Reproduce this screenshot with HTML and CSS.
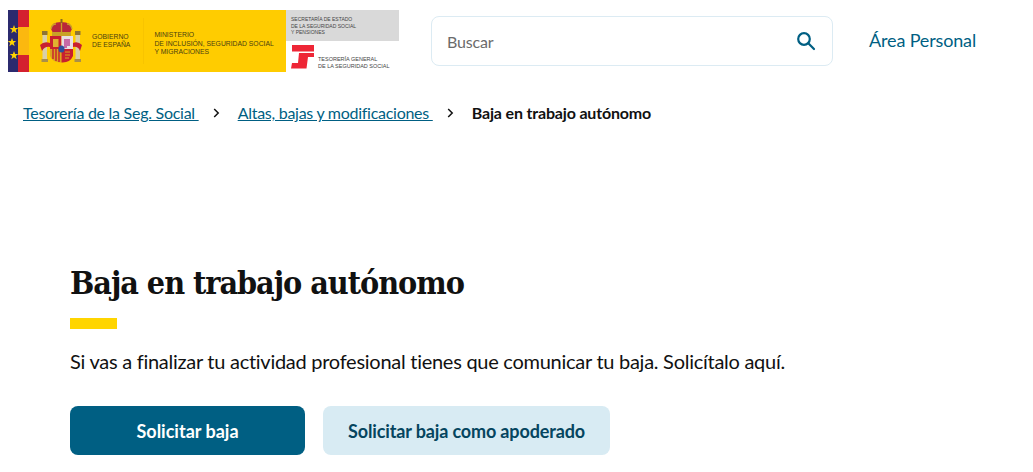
FILE: index.html
```html
<!DOCTYPE html>
<html lang="es">
<head>
  <meta charset="UTF-8">
  <meta name="viewport" content="width=device-width, initial-scale=1.0">
  <title>Baja en trabajo autónomo</title>
  <link rel="stylesheet" href="styles.css">
</head>
<body>
  <header class="site-header">
    <a href="#" class="logo">
      <div class="logo-flag">
        <div class="flag-eu">
          <svg width="10" height="62" viewBox="0 0 10 62">
            <polygon fill="#ffd400" points="6,15 7.100,18 10.300,18 7.700,20 8.700,23.200 6,21.300 3.300,23.200 4.300,20 1.700,18 4.900,18"/>
            <polygon fill="#ffd400" points="4,28 5.100,31 8.300,31 5.700,33 6.700,36.200 4,34.300 1.300,36.200 2.300,33 -0.300,31 2.900,31"/>
            <polygon fill="#ffd400" points="6,41 7.100,44 10.300,44 7.700,46 8.700,49.200 6,47.300 3.300,49.200 4.300,46 1.700,44 4.900,44"/>
          </svg>
        </div>
        <div class="flag-es"></div>
      </div>
      <div class="logo-gov">
        <svg class="arms" width="42" height="44" viewBox="0 0 42 44">
          <!-- columnas -->
          <rect x="2.500" y="15" width="4.500" height="25" fill="#d9cfa8"/>
          <rect x="35.500" y="15" width="4.500" height="25" fill="#d9cfa8"/>
          <rect x="2" y="12" width="5.500" height="4" fill="#8f7434"/>
          <rect x="35" y="12" width="5.500" height="4" fill="#8f7434"/>
          <rect x="1.500" y="40" width="6.500" height="3" fill="#a98f4a"/>
          <rect x="34.500" y="40" width="6.500" height="3" fill="#a98f4a"/>
          <path d="M0 26 Q4 22 10 24 L10 28 Q5 27 2 32Z" fill="#c8202f"/>
          <path d="M42 26 Q38 22 33 24 L33 28 Q38 27 40 32Z" fill="#c8202f"/>
          <!-- corona -->
          <path d="M11 10 Q11 3 21 3 Q32 3 32 10 L30 14 H13Z" fill="#b9283a"/>
          <path d="M11 10 Q12 5 16 5 M32 10 Q31 5 27 5 M21.500 3 V13" stroke="#c9a227" stroke-width="1.300" fill="none"/>
          <rect x="12" y="13" width="19" height="4" fill="#c9a227"/>
          <rect x="20.500" y="0" width="2" height="4" fill="#8a6a20"/>
          <!-- escudo -->
          <path d="M10 17 H21.500 V30 H10Z" fill="#c8202f"/>
          <path d="M21.500 17 H33 V30 H21.500Z" fill="#e8dfe2"/>
          <rect x="13" y="20" width="5.500" height="8" fill="#e0b030"/>
          <path d="M24 20 H30 V27 H27 V29 H24Z" fill="#c76aa6"/>
          <path d="M10 30 H21.500 V43.500 Q13 44 10 37Z" fill="#d9a520"/>
          <path d="M21.500 30 H33 V37 Q30 44 21.500 43.500Z" fill="#c8202f"/>
          <path d="M13 30 V40 M16 30 V42 M19 30 V43" stroke="#c8202f" stroke-width="1.400"/>
          <path d="M25 33 H30 M25 36 H30 M25 39 H29" stroke="#d9a520" stroke-width="1"/>
          <ellipse cx="21.500" cy="30" rx="3" ry="3.500" fill="#2f4f9a"/>
        </svg>
        <span class="gov-name">GOBIERNO<br>DE ESPAÑA</span>
        <span class="gov-sep"></span>
        <span class="gov-name gov-ministry">MINISTERIO<br>DE INCLUSIÓN, SEGURIDAD SOCIAL<br>Y MIGRACIONES</span>
      </div>
      <div class="logo-side">
        <div class="side-top">SECRETARÍA DE ESTADO<br>DE LA SEGURIDAD SOCIAL<br>Y PENSIONES</div>
        <div class="side-bottom">
          <svg width="24" height="24" viewBox="0 0 24 24">
            <path fill="#ee2636" d="M1 0H23V6.500H1Z M8 8H23V12H17L15.500 23.500H0L1 18H7Z"/>
          </svg>
          <span>TESORERÍA GENERAL<br>DE LA SEGURIDAD SOCIAL</span>
        </div>
      </div>
    </a>
    <form class="search-box">
      <span class="search-label">Buscar</span>
      <svg width="20" height="20" viewBox="0 0 20 20" fill="none" stroke="#005f83" stroke-width="2.200">
        <circle cx="8" cy="8" r="5.800"/>
        <path d="M12.300 12.300 L18 18" stroke-linecap="round"/>
      </svg>
    </form>
    <a href="#" class="personal-link">Área Personal</a>
  </header>

  <nav class="breadcrumb">
    <a href="#">Tesorería de la Seg. Social </a>
    <svg class="crumb-arrow" width="7" height="10" viewBox="0 0 7 10" fill="none" stroke="#111" stroke-width="1.500"><path d="M1.200 1 L5.200 5 L1.200 9"/></svg>
    <a href="#">Altas, bajas y modificaciones </a>
    <svg class="crumb-arrow" width="7" height="10" viewBox="0 0 7 10" fill="none" stroke="#111" stroke-width="1.500"><path d="M1.200 1 L5.200 5 L1.200 9"/></svg>
    <span class="crumb-current">Baja en trabajo autónomo</span>
  </nav>

  <main class="content">
    <h1>Baja en trabajo autónomo</h1>
    <div class="title-bar"></div>
    <p>Si vas a finalizar tu actividad profesional tienes que comunicar tu baja. Solicítalo aquí.</p>
    <div class="actions">
      <a href="#" class="btn btn-primary">Solicitar baja</a>
      <a href="#" class="btn btn-secondary">Solicitar baja como apoderado</a>
    </div>
  </main>
</body>
</html>
```

FILE: styles.css
```css
html, body {
  height: 100%;
}

body {
  font-family: Lato, "Open Sans", sans-serif;
  margin: 0;
  padding: 0;
  background-color: white;
  color: #111;
  overflow: hidden;
}

a {
  color: #005f83;
}

.site-header {
  display: flex;
  align-items: flex-start;
  padding: 10px 0 0 8px;
}

/* logo */
.logo {
  display: flex;
  width: 391px;
  height: 62px;
  text-decoration: none;
  color: #333;
  flex-shrink: 0;
}

.logo-flag {
  display: flex;
  flex-shrink: 0;
}

.flag-eu {
  width: 10px;
  background-color: #2b2a6e;
  overflow: hidden;
}

.flag-es {
  width: 11px;
  background: linear-gradient(#d4202f 0 27%, #fbb80f 27% 73%, #d4202f 73%);
}

.logo-gov {
  display: flex;
  align-items: center;
  width: 257px;
  background-color: #ffcc00;
  padding-left: 11px;
  box-sizing: border-box;
  flex-shrink: 0;
}

.arms {
  flex-shrink: 0;
  margin-right: 10px;
}

.gov-name {
  font-family: "Liberation Sans", Arial, sans-serif;
  font-size: 6.800px;
  line-height: 8.500px;
  color: #4a3f10;
  white-space: nowrap;
}

.gov-ministry {
  margin-top: 6px;
}

.gov-sep {
  width: 1px;
  height: 46px;
  background-color: #f8c400;
  margin: 0 10px 0 13px;
}

.logo-side {
  flex: 1;
  display: flex;
  flex-direction: column;
}

.side-top {
  height: 31px;
  background-color: #d9d9d9;
  font-family: "Liberation Sans", Arial, sans-serif;
  font-size: 5px;
  line-height: 6.500px;
  padding: 6px 0 0 5px;
  box-sizing: border-box;
  color: #444;
  white-space: nowrap;
}

.side-bottom {
  flex: 1;
  display: flex;
  align-items: flex-start;
  padding: 4px 0 0 5px;
  font-family: "Liberation Sans", Arial, sans-serif;
  font-size: 5.500px;
  line-height: 7px;
  color: #444;
  white-space: nowrap;
}

.side-bottom span {
  margin: 11px 0 0 3px;
}

/* buscador */
.search-box {
  display: flex;
  align-items: center;
  justify-content: space-between;
  width: 402px;
  height: 50px;
  margin: 6px 0 0 32px;
  padding: 0 16px 0 15px;
  box-sizing: border-box;
  border: 1px solid #dcebf3;
  border-radius: 8px;
  flex-shrink: 0;
}

.search-label {
  font-size: 16px;
  letter-spacing: -0.15px;
  color: #6b6b6b;
}

.personal-link {
  margin: 19px 0 0 36px;
  font-size: 18px;
  letter-spacing: -0.15px;
  text-decoration: none;
  white-space: nowrap;
}

/* migas */
.breadcrumb {
  display: flex;
  align-items: center;
  margin: 29px 0 0 23px;
  font-size: 16px;
  line-height: 24px;
  white-space: nowrap;
}

.breadcrumb a {
  white-space: pre;
  letter-spacing: -0.27px;
}

.crumb-arrow {
  margin: 0 18px 0 14px;
}

.crumb-current {
  font-weight: bold;
  letter-spacing: -0.17px;
}

/* contenido */
.content {
  padding: 0 0 0 70px;
}

h1 {
  font-family: "DejaVu Serif Condensed", "Liberation Serif", serif;
  font-size: 32px;
  line-height: 44px;
  letter-spacing: -1.040px;
  font-weight: bold;
  margin: 136px 0 0 0;
  color: #111;
}

.title-bar {
  width: 47px;
  height: 11px;
  background-color: #ffd500;
  margin-top: 13px;
}

p {
  font-size: 20px;
  line-height: 28px;
  letter-spacing: -0.27px;
  margin: 18px 0 0 0;
}

.actions {
  display: flex;
  gap: 18px;
  margin-top: 31px;
}

.btn {
  display: flex;
  align-items: center;
  justify-content: center;
  height: 49px;
  border-radius: 8px;
  font-size: 18px;
  font-weight: bold;
  text-decoration: none;
  box-sizing: border-box;
}

.btn-primary {
  width: 235px;
  background-color: #005f83;
  color: white;
}

.btn-secondary {
  width: 287px;
  background-color: #d8ebf3;
  color: #05455f;
  letter-spacing: -0.14px;
}
```
